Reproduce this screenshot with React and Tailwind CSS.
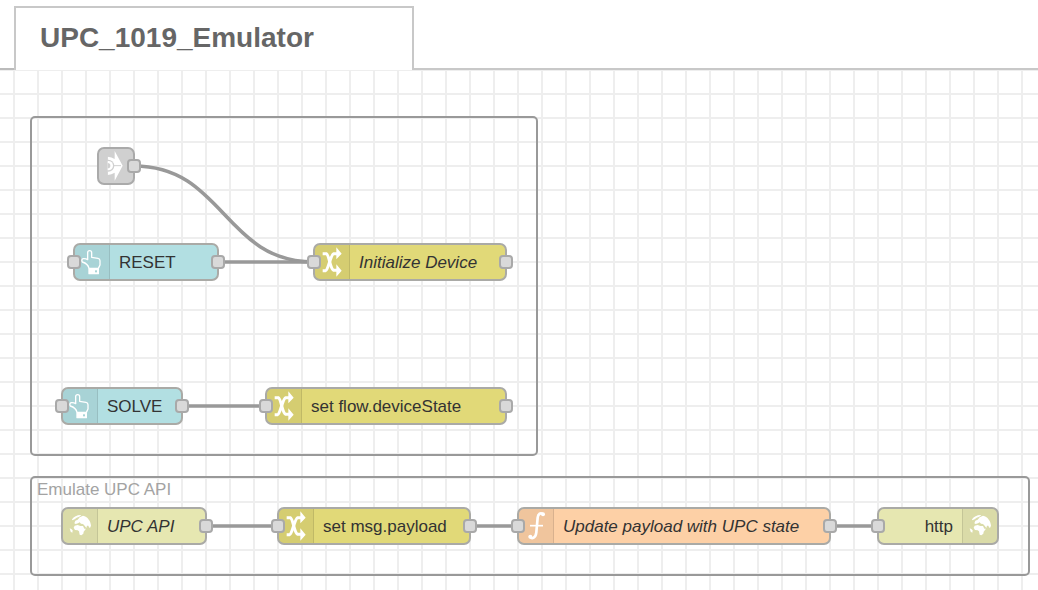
import React from "react";

function SwapIcon() {
  return (
    <svg viewBox="6 6 102 102" className="size-full" aria-hidden="true">
      <g fill="none" stroke="#fff">
        <path strokeWidth="9" d="M29 32 H40 C49 36 51 78 62 82 H74" />
        <path strokeWidth="9" d="M29 83 H38 C46 81 53 34 62 32 H74" />
      </g>
      <path fill="#fff" d="M70 13 L86 32 L70 49 Z M70 64 L86 83 L70 101 Z" />
    </svg>
  );
}

function FunctionIcon() {
  return (
    <svg viewBox="6 6 102 102" className="size-full" aria-hidden="true">
      <g fill="none" stroke="#fff" strokeLinecap="round">
        <path strokeWidth="8" d="M78 22 C71 16 63 20 62 32 L58 76 C56 93 45 97 39 90" />
        <path strokeWidth="5" strokeLinecap="butt" d="M39 56 H78" />
      </g>
      <circle cx="78" cy="22" r="6" fill="#fff" />
      <circle cx="40" cy="89" r="6" fill="#fff" />
    </svg>
  );
}

function HandIcon() {
  return (
    <svg viewBox="6 6 102 102" className="size-full" aria-hidden="true">
      <path
        fill="none"
        stroke="#fff"
        strokeWidth="4"
        strokeLinejoin="round"
        d="M44 50 V29 Q44 23 50 23 T56 29 V43 L75 46 Q81 47 81 53 V66 L76 76 H48 C46 66 38 60 28 57 Q24 49 31 47 Q38 46 44 50 Z"
      />
      <rect x="46" y="76" width="32" height="18" rx="2" fill="#fff" />
      <rect x="66" y="82" width="6" height="6" fill="#a8d4d6" />
    </svg>
  );
}

function GlobeIcon() {
  return (
    <svg viewBox="6 6 102 102" className="size-full" aria-hidden="true">
      <g fill="#fff">
        <path d="M33 37 C39 28 50 23 61 24 L55 29 L47 32 L41 37 L34 40 Z" />
        <path d="M40 49 L43 41 L50 38 L56 31 L66 26 C80 29 89 42 90 56 L87 63 L84 61 L82 56 L78 56 L76 63 L71 56 L66 51 L60 50 L56 46 L51 49 L44 51 Z" />
        <path d="M41 56 L50 54 L58 57 L66 57 L70 65 L75 65 L68 74 L67 80 L61 85 L56 83 L54 73 L50 70 L42 69 L38 62 Z" />
        <path d="M26 64 L31 66 L35 70 L34 77 L29 74 Z" />
      </g>
    </svg>
  );
}

function LinkIcon() {
  return (
    <svg viewBox="6 6 102 102" className="size-full" aria-hidden="true">
      <clipPath id="link-clip">
        <rect x="32" y="10" width="48" height="94" />
      </clipPath>
      <g clipPath="url(#link-clip)">
        <path fill="#fff" d="M32 29 Q44 30 53 36 V12 L77 56 L53 101 V77 Q44 83 32 84 Z" />
        <path stroke="#d0d0d0" strokeWidth="3" d="M46 56 H72" />
        <circle cx="34" cy="56" r="18" fill="#d0d0d0" />
        <circle cx="34" cy="56" r="14" fill="#fff" />
        <circle cx="32" cy="56" r="8" fill="#d0d0d0" />
      </g>
    </svg>
  );
}

const kinds = {
  button: { color: "bg-[#b2dfe2]", Icon: HandIcon },
  change: { color: "bg-[#e1d978]", Icon: SwapIcon },
  http: { color: "bg-[#e6e7b1]", Icon: GlobeIcon },
  function: { color: "bg-[#fdd0a6]", Icon: FunctionIcon },
};

function Port({ side }) {
  return (
    <span
      className={`absolute top-[10px] size-[14px] rounded-[4px] border-2 border-[#a9a9a9] bg-[#d9d9d9] ${
        side === "in" ? "left-[-8px]" : "right-[-8px]"
      }`}
    />
  );
}

function Node({ kind, place, label, input, output, italic, iconRight }) {
  const { color, Icon } = kinds[kind];
  return (
    <div
      className={`absolute flex h-[38px] items-stretch rounded-[7px] border-2 border-[#aaaaa6] ${color} ${place} ${
        iconRight ? "flex-row-reverse" : ""
      }`}
    >
      <span
        className={`w-[35px] shrink-0 bg-black/5 ${
          iconRight ? "rounded-r-[5px] border-l border-black/10" : "rounded-l-[5px] border-r border-black/10"
        }`}
      >
        <Icon />
      </span>
      <span
        className={`flex-1 px-[9px] text-[17px] leading-[36px] whitespace-nowrap text-[#333] ${
          italic ? "italic" : ""
        } ${iconRight ? "text-right" : ""}`}
      >
        {label}
      </span>
      {input && <Port side="in" />}
      {output && <Port side="out" />}
    </div>
  );
}

function Wires() {
  return (
    <svg className="pointer-events-none absolute inset-0 size-full" aria-hidden="true">
      <g fill="none" stroke="#999" strokeWidth="3.6">
        <path d="M134 96 C224 96 224 192 314 192" />
        <path d="M218 192 H314" />
        <path d="M182 336 H266" />
        <path d="M206 456 H278" />
        <path d="M470 456 H518" />
        <path d="M830 456 H878" />
      </g>
    </svg>
  );
}

export default function App() {
  return (
    <div className="flex min-h-screen flex-col bg-white font-['Liberation_Sans',Arial,sans-serif]">
      <header className="flex h-[70px] items-end">
        <div className="w-[14px] border-b-2 border-[#bbb]" />
        <button
          type="button"
          className="flex h-16 w-[400px] items-start border-x-2 border-t-2 border-[#c8c8c8] px-6 text-left text-[28px] leading-[60px] font-bold text-[#666]"
        >
          UPC_1019_Emulator
        </button>
        <div className="flex-1 border-b-2 border-[#c8c8c8]" />
      </header>

      <main className="relative flex-1 overflow-hidden bg-[linear-gradient(to_right,#eee_2px,transparent_2px),linear-gradient(to_bottom,#eee_2px,transparent_2px)] bg-[size:24px_24px] bg-[position:13px_-1px]">
        <section className="absolute top-[46px] left-[30px] h-[340px] w-[508px] rounded-[5px] border-2 border-[#999]" />
        <section className="absolute top-[406px] left-[30px] h-[100px] w-[1000px] rounded-[5px] border-2 border-[#999] px-[5px]">
          <h2 className="text-[17px] leading-[23px] text-[#a3a3a3]">Emulate UPC API</h2>
        </section>

        <Wires />

        <div className="absolute top-[77px] left-[97px] size-[38px] rounded-[7px] border-2 border-[#aaaaaa] bg-[#d0d0d0]">
          <LinkIcon />
          <Port side="out" />
        </div>

        <Node kind="button" place="left-[73px] top-[173px] w-[146px]" label="RESET" input output />
        <Node kind="change" place="left-[313px] top-[173px] w-[194px]" label="Initialize Device" italic input output />
        <Node kind="button" place="left-[61px] top-[317px] w-[122px]" label="SOLVE" input output />
        <Node kind="change" place="left-[265px] top-[317px] w-[242px]" label="set flow.deviceState" input output />
        <Node kind="http" place="left-[61px] top-[437px] w-[146px]" label="UPC API" italic output />
        <Node kind="change" place="left-[277px] top-[437px] w-[194px]" label="set msg.payload" input output />
        <Node
          kind="function"
          place="left-[517px] top-[437px] w-[314px]"
          label="Update payload with UPC state"
          italic
          input
          output
        />
        <Node kind="http" place="left-[877px] top-[437px] w-[122px]" label="http" input iconRight />
      </main>
    </div>
  );
}
